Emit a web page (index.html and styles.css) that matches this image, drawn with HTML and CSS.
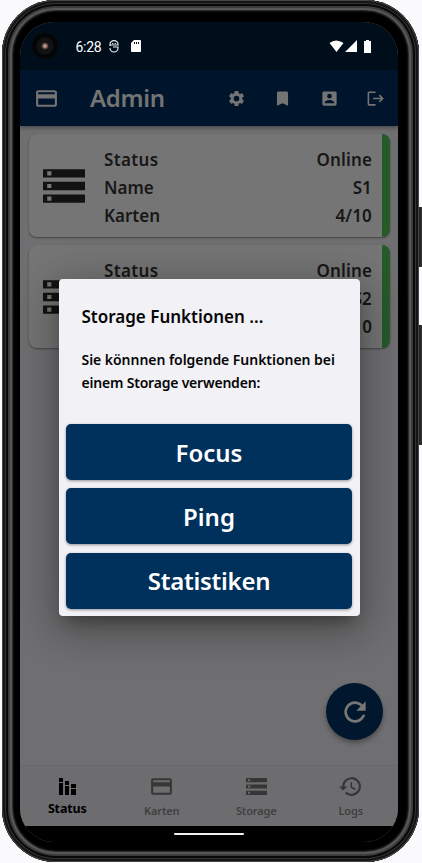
FILE: index.html
```
<!DOCTYPE html>
<html lang="de">
<head>
<meta charset="utf-8">
<title>Admin</title>
<link rel="stylesheet" href="styles.css">
</head>
<body>
<svg width="0" height="0" class="defs">
  <symbol id="card" viewBox="0 0 24 24"><path d="M20 4H4c-1.1 0-2 .9-2 2v12c0 1.100.9 2 2 2h16c1.100 0 2-.9 2-2V6c0-1.100-.9-2-2-2zm0 14H4v-6h16v6zm0-10H4V6h16v2z"/></symbol>
  <symbol id="storage" viewBox="2 4 20 16"><path fill-rule="evenodd" d="M2 20h20v-4H2v4zm2-3h2v2H4v-2zM2 4v4h20V4H2zm4 3H4V5h2v2zm-4 7h20v-4H2v4zm2-3h2v2H4v-2z"/></symbol>
</svg>
<div class="key power"></div>
<div class="key volume"></div>
<div class="phone">
  <div class="screen">
    <div class="statusbar">
      <div class="camera"></div>
      <span class="time">6:28</span>
      <svg class="sys" viewBox="0 0 10 13" width="10" height="13"><path d="M1 6V4a4 3.400 0 0 1 8 0v1H1M1 8a4 4 0 0 0 8 0V7H4" fill="none" stroke="#e8edf0" stroke-width="1.200"/><path d="M3 3.500h1.300m1.400 0H7" stroke="#e8edf0"/></svg>
      <svg class="sd" viewBox="0 0 10 12" width="10" height="12"><path fill="#fff" fill-rule="evenodd" d="M3 0h6q1 0 1 1v10q0 1-1 1H1q-1 0-1-1V3zM3 2v2h1V2zm2 0v2h1V2zm2 0v2h1V2z"/></svg>
      <svg class="signals" viewBox="0 0 43 13" width="43" height="13"><path fill="#fff" d="M.5 3Q7-2.200 14.500 3L7.500 12zM28 0v12H16zM37 1V0h3v1h2v12h-7V1z"/></svg>
    </div>
    <header class="appbar">
      <svg class="menu" width="25" height="25"><use href="#card"/></svg>
      <h1>Admin</h1>
      <svg class="action" viewBox="0 0 24 24"><path d="M19.140 12.940c.04-.3.060-.61.060-.94s-.02-.64-.07-.94l2.030-1.580a.5.5 0 0 0 .12-.61l-1.920-3.320a.5.5 0 0 0-.59-.22l-2.390.96a7 7 0 0 0-1.620-.94L14.400 2.810a.5.5 0 0 0-.48-.41h-3.840a.5.5 0 0 0-.47.41L9.250 5.350a7 7 0 0 0-1.620.94l-2.390-.96a.5.5 0 0 0-.59.22L2.740 8.870a.5.5 0 0 0 .12.610l2.030 1.580a7 7 0 0 0 0 1.880l-2.030 1.580a.5.5 0 0 0-.12.610l1.920 3.320c.12.220.370.290.590.220l2.390-.96c.5.380 1.030.7 1.620.94l.36 2.540c.05.240.240.410.480.410h3.840c.24 0 .44-.17.470-.41l.36-2.540a7 7 0 0 0 1.620-.94l2.390.96c.22.080.470 0 .59-.22l1.920-3.320a.5.5 0 0 0-.12-.61zM12 15.600a3.600 3.600 0 1 1 0-7.200 3.600 3.600 0 0 1 0 7.200z"/></svg>
      <svg class="action" viewBox="0 0 24 24"><path d="M17 3H7c-1.100 0-2 .9-2 2v16l7-3 7 3V5c0-1.100-.9-2-2-2z"/></svg>
      <svg class="action" viewBox="0 0 24 24"><path fill-rule="evenodd" d="M3 5v14c0 1.100.89 2 2 2h14c1.100 0 2-.9 2-2V5c0-1.100-.9-2-2-2H5c-1.110 0-2 .9-2 2zm12 4a3 3 0 1 1-6 0 3 3 0 0 1 6 0zm-9 8c0-2 4-3.100 6-3.100s6 1.100 6 3.100v1H6z"/></svg>
      <svg class="action" viewBox="0 0 24 24"><path d="M12 3H4q-2 0-2 2v14q0 2 2 2h8v-2H4V5h8zM17.500 7l-1.400 1.400 2.600 2.600H9v2h9.700l-2.600 2.600 1.400 1.400 5-5z"/></svg>
    </header>
    <main class="content">
      <section class="card">
        <svg class="server"><use href="#storage"/></svg>
        <dl><dt class="wide">Status</dt><dd>Online</dd><dt>Name</dt><dd>S1</dd><dt>Karten</dt><dd>4/10</dd></dl>
      </section>
      <section class="card">
        <svg class="server"><use href="#storage"/></svg>
        <dl><dt class="wide">Status</dt><dd>Online</dd><dt></dt><dd>S2</dd><dt></dt><dd>0</dd></dl>
      </section>
    </main>
    <button class="fab"><svg viewBox="0 0 24 24" width="32" height="32"><path d="M17.650 6.350A8 8 0 1 0 19.730 14h-2.080A6 6 0 1 1 12 6c1.660 0 3.140.69 4.220 1.780L13 11h7V4z"/></svg></button>
    <nav class="tabs">
      <div class="tab active"><svg viewBox="0 0 18 17" width="18" height="17"><path d="M0 0h4v4H0zM0 5h4v12H0zM6 3h4v4H6zM6 8h4v9H6zM12 6h5v4h-5zM12 11h5v6h-5z"/></svg><span>Status</span></div>
      <div class="tab"><svg width="25" height="25"><use href="#card"/></svg><span>Karten</span></div>
      <div class="tab"><svg width="21" height="17"><use href="#storage"/></svg><span>Storage</span></div>
      <div class="tab"><svg viewBox="0 0 24 24" width="25" height="25"><path d="M13 3a9 9 0 0 0-9 9H1l3.900 3.900L9 12H6a7 7 0 1 1 2.060 4.940l-1.420 1.420A9 9 0 1 0 13 3zm-1 5v5l4.250 2.520.77-1.280-3.520-2.090V8z"/></svg><span>Logs</span></div>
    </nav>
    <div class="gesture"><i></i></div>
  </div>
</div>
<div class="dialog">
  <h2>Storage Funktionen ...</h2>
  <p><span class="l1">Sie könnnen folgende Funktionen bei</span><br><span class="l2">einem Storage verwenden:</span></p>
  <button>Focus</button>
  <button>Ping</button>
  <button class="long">Statistiken</button>
</div>
</body>
</html>
```
FILE: styles.css
```
* { box-sizing: border-box; }
body { margin: 0; height: 863px; overflow: hidden; position: relative; background: #fafafd; font-family: "Noto Sans", sans-serif; font-weight: 600; }
.defs { position: absolute; }
.key { position: absolute; left: 417px; width: 6px; background: linear-gradient(90deg, #111, #3a3a3a); border-radius: 2px; }
.power { top: 207px; height: 60px; }
.volume { top: 325px; height: 120px; }
.phone { position: relative; width: 417px; height: 862px; margin-left: 2px; padding: 22px 19px 20px 18px; background: #000; border-radius: 54px;
  box-shadow: inset 0 0 0 1px #454745, inset 0 0 0 3px #151515, inset 0 0 0 4px #343434, inset 0 0 0 6px #080808, inset 0 0 1px 8px #3b3b3b, inset 0 0 1px 10px #5c5c5c, inset 0 0 2px 11px #333; }
.screen { position: relative; height: 820px; width: 378px; border-radius: 34px; overflow: hidden; display: flex; flex-direction: column; background: #6f6f71; }
.statusbar { height: 48px; flex: none; background: #000e1b; display: flex; align-items: center; padding: 0 26px 0 12px; color: #fff; }
.camera { width: 26px; height: 26px; border-radius: 50%; background: radial-gradient(circle, #b99b8c 0 1px, #49352d 3px, #101214 4px 8px, #050505 9px); }
.time { font: 400 14px/20px Roboto, sans-serif; margin: 2px 0 0 17.500px; width: 33px; letter-spacing: -0.300px; }
.sd { margin-left: 12px; }
.signals { margin-left: auto; }
.appbar { height: 56px; flex: none; background: #00152b; display: flex; align-items: center; padding-left: 14px; color: #747474; fill: #747474; position: relative; box-shadow: 0 2px 4px #0005; }
.menu { flex: none; }
.appbar h1 { font-size: 24px; line-height: 36px; font-weight: 600; letter-spacing: -0.300px; margin: 0 0 1px 31px; width: 137px; flex: none; }
.action { width: 19px; height: 19px; flex: none; margin-right: 27.300px; }
.action:last-child { margin-right: 0; }
.content { flex: 1; padding: 8px 8px 0 9px; }
.card { height: 103px; margin-bottom: 8px; background: #757575; border-radius: 8px; border-right: 8px solid #275a29; box-shadow: 0 1px 2px #0006; display: flex; align-items: center; padding: 0 10px 0 14px; }
.server { width: 42px; height: 34px; fill: #121212; }
.card dl { flex: 1; margin: 0 0 0 19px; padding-top: 4px; display: grid; grid-template-columns: 1fr auto; grid-auto-rows: 28px; font-size: 17px; line-height: 28px; color: #171717; }
.card dd { margin: 0; text-align: right; letter-spacing: 0.150px; }
.card .wide { letter-spacing: 0.350px; }
.fab { position: absolute; left: 306px; top: 661px; width: 57px; height: 57px; padding: 0; border: 0; border-radius: 50%; background: #00172e; display: grid; place-items: center; fill: #777; box-shadow: 0 3px 5px #0005; }
.tabs { height: 61px; flex: none; display: grid; grid-template-columns: repeat(4, 1fr); border-top: 1px solid #68686a; background: #6d6d6f; color: #3f3f40; fill: #363637; font-size: 11px; letter-spacing: -0.150px; }
.tab { display: grid; grid-template-rows: 40px 18px; place-items: center; line-height: 16px; }
.tab span { margin-top: -9px; }
.tab.active { color: #000; fill: #000; font-size: 12.500px; font-weight: 700; }
.tab.active svg { margin-left: 2px; }
.tab.active span { margin-top: -13px; }
.gesture { height: 16px; flex: none; background: #000; display: flex; justify-content: center; padding-top: 7px; }
.gesture i { width: 70px; height: 2px; background: #eef1f2; border-radius: 1px; }
.dialog { position: absolute; left: 58.500px; top: 279px; width: 301px; height: 337px; padding: 25px 7.500px 0; background: #f2f1f6; border-radius: 4px; color: #050505; display: flex; flex-direction: column; box-shadow: 0 11px 15px -7px #0005, 0 12px 38px 3px #0003, 0 9px 46px 8px #0002; }
.dialog h2 { margin: 0 0 19px 15.500px; font-size: 17px; line-height: 26px; font-weight: 600; white-space: nowrap; }
.dialog p { margin: 0 0 30px 15.500px; font-size: 14px; line-height: 22.500px; white-space: nowrap; height: 45px; letter-spacing: -0.040px; }
.dialog .l2 { letter-spacing: -0.200px; }
.dialog button { height: 56px; flex: none; margin: 0 0 8.300px; padding: 0; border: 0; border-radius: 5px; background: #00305c; color: #fff; font: 600 24px "Noto Sans", sans-serif; box-shadow: 0 1px 3px #0006; }
.dialog .long { letter-spacing: -0.250px; }
```
